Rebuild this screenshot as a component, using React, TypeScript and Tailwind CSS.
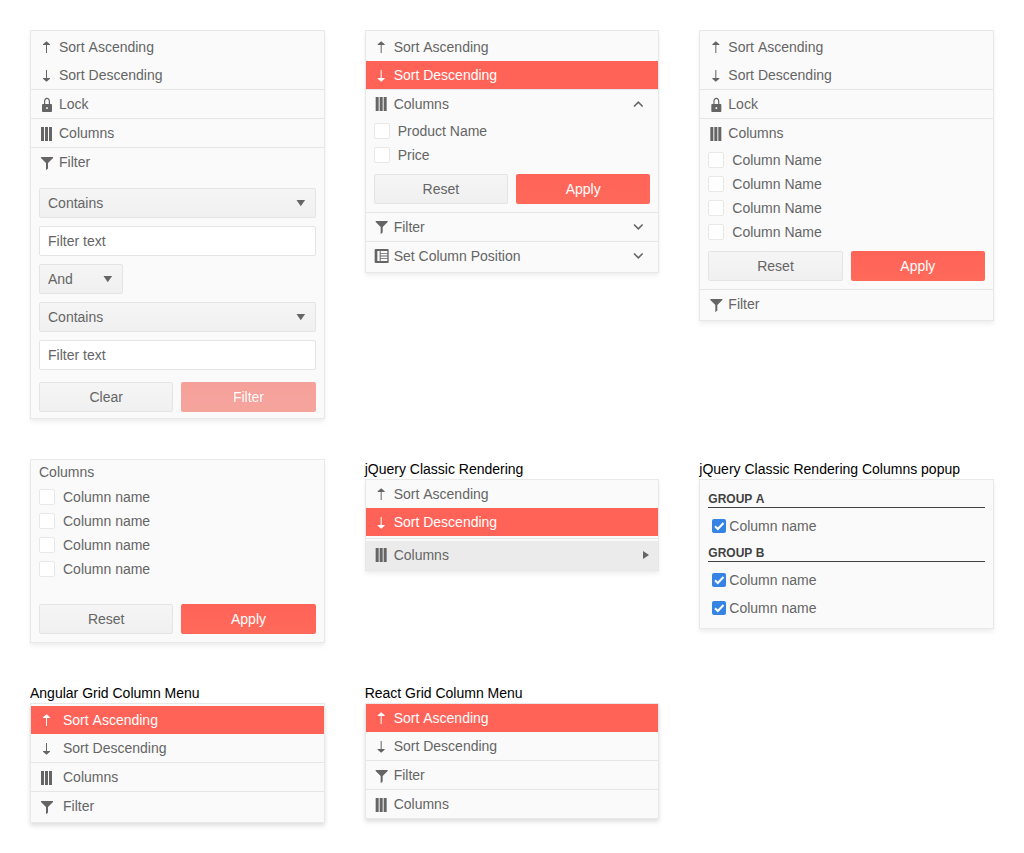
import type { ReactNode } from "react";

type IconName = "asc" | "desc" | "lock" | "columns" | "filter" | "position" | "up" | "down" | "caret" | "right";

const shapes: Record<IconName, ReactNode> = {
  asc: <path d="M7 14V6H4v-.8L7.500 2.300 11 5.200V6H8v8z" />,
  desc: <path d="M7 3v8H4v.8l3.500 2.900 3.500-2.900V11H8V3z" />,
  lock: <path d="M11 7V4.500C11 2.300 9.700.7 8 .7S5 2.300 5 4.500V7H4c-.6 0-1 .4-1 1v6c0 .6.4 1 1 1h8c.6 0 1-.4 1-1V8c0-.6-.4-1-1-1h-1zM6.200 4.500C6.200 3 7 1.900 8 1.900s1.800 1.100 1.800 2.600V7H6.200zM8.800 12H7.200v-1.700h1.600z" fillRule="evenodd" />,
  columns: <path d="M2 1h3v14H2zM6 1h3v14H6zM10 1h3v14h-3z" />,
  filter: <path d="M2 2h12v1L9 8v5.500L7.300 15H7V8L2 3z" />,
  position: <path d="M2 1h12q1 0 1 1v12q0 1-1 1H2q-1 0-1-1V2q0-1 1-1zM3.700 3v10H6V3zM7 3v1.900h6.700V3zM7 5.800v1.700h6.700V5.800zM7 8.500v1.700h6.700V8.500zM7 11.100V13h6.700v-1.900z" fillRule="evenodd" />,
  up: <path d="M3.700 10.500 8 6.200l4.300 4.300" fill="none" stroke="currentColor" strokeWidth="1.600" />,
  down: <path d="M3.700 5.500 8 9.800l4.300-4.300" fill="none" stroke="currentColor" strokeWidth="1.600" />,
  caret: <path d="M3.500 5h8.600L7.800 11.200z" />,
  right: <path d="M5 4v8l6-4z" />,
};

function Icon({ name, className = "" }: { name: IconName; className?: string }) {
  return (
    <svg viewBox="0 0 16 16" fill="currentColor" className={`size-4 shrink-0 ${className}`}>
      {shapes[name]}
    </svg>
  );
}

function Panel({ children, className = "", deep = false }: { children: ReactNode; className?: string; deep?: boolean }) {
  const shadow = deep
    ? "shadow-[0_2px_4px_rgba(0,0,0,0.08),0_4px_5px_rgba(0,0,0,0.06)]"
    : "shadow-[0_2px_4px_rgba(0,0,0,0.03),0_4px_5px_rgba(0,0,0,0.04)]";
  return <div className={`border border-[#e8e8e8] bg-[#fafafa] text-[#656565] ${shadow} ${className}`}>{children}</div>;
}

interface ItemProps {
  icon: IconName;
  label: string;
  end?: IconName;
  active?: boolean;
  hover?: boolean;
  wide?: boolean;
  low?: boolean;
}

function Item({ icon, label, end, active, hover, wide, low }: ItemProps) {
  return (
    <div
      className={`flex h-7 items-center px-2 ${wide ? "gap-2" : "gap-1"} ${active ? "bg-[#ff6358] text-white" : ""} ${hover ? "bg-[#ebebeb]" : ""}`}
    >
      <Icon name={icon} className={low ? "mt-0.5" : ""} />
      <span className="flex-1">{label}</span>
      {end && <Icon name={end} className={end === "right" ? "-mr-1" : "mr-1 translate-x-[0.33px]"} />}
    </div>
  );
}

const Separator = () => <div className="h-px bg-[#e6e6e6]" />;

function CheckRow({ label }: { label: string }) {
  return (
    <label className="flex h-6 items-center gap-2">
      <span className="size-4 rounded-xs border border-[#e8e8e8] bg-white" />
      {label}
    </label>
  );
}

function Actions({ first, second, disabled }: { first: string; second: string; disabled?: boolean }) {
  return (
    <div className="grid grid-cols-2 gap-2">
      <button className="h-[30px] rounded-xs border border-[#e4e4e4] bg-linear-to-b from-[#f5f5f5] to-[#f0f0f0]">{first}</button>
      <button
        className={`h-[30px] rounded-xs bg-linear-to-b from-[#ff6358] to-[#ff6a5a] text-white ${disabled ? "opacity-60 grayscale-[0.1]" : ""}`}
      >
        {second}
      </button>
    </div>
  );
}

function Picker({ value, className = "" }: { value: string; className?: string }) {
  return (
    <div
      className={`flex h-[30px] items-center justify-between rounded-xs border border-[#e4e4e4] bg-linear-to-b from-[#f5f5f5] to-[#f0f0f0] pr-1.5 pl-2 ${className}`}
    >
      {value}
      <Icon name="caret" />
    </div>
  );
}

function TextField() {
  return <div className="flex h-[30px] items-center rounded-xs border border-[#e4e4e4] bg-white px-2">Filter text</div>;
}

function Group({ title, names }: { title: string; names: string[] }) {
  return (
    <div>
      <div className="h-[18px] border-b border-[#424242] text-xs/[18px] font-bold text-[#424242]">{title}</div>
      <div className="pt-1 pb-1">
        {names.map((name, i) => (
          <label key={i} className="flex h-7 items-center gap-[3px] pl-1">
            <svg viewBox="0 0 14 14" className="size-3.5">
              <rect width="14" height="14" rx="2" fill="#3584e4" />
              <path d="M3 7.200 5.800 10 11.500 4" fill="none" stroke="#fff" strokeWidth="2" />
            </svg>
            {name}
          </label>
        ))}
      </div>
    </div>
  );
}

const Title = ({ children }: { children: ReactNode }) => <div className="h-5 text-black">{children}</div>;

export default function App() {
  return (
    <main className="grid min-h-[853px] grid-cols-3 content-start items-start gap-10 bg-white p-[30px] font-['Liberation_Sans',Arial,sans-serif] text-sm/5 [font-kerning:none]">
      <Panel className="pt-0.5">
        <Item icon="asc" label="Sort Ascending" />
        <Item icon="desc" label="Sort Descending" />
        <Separator />
        <Item icon="lock" label="Lock" low />
        <Separator />
        <Item icon="columns" label="Columns" low />
        <Separator />
        <Item icon="filter" label="Filter" low />
        <div className="flex flex-col gap-2 px-2 pt-3 pb-1.5">
          <Picker value="Contains" />
          <TextField />
          <Picker value="And" className="w-[84px]" />
          <Picker value="Contains" />
          <TextField />
          <div className="pt-1">
            <Actions first="Clear" second="Filter" disabled />
          </div>
        </div>
      </Panel>

      <Panel className="py-0.5 [&_svg:first-child]:-translate-x-[0.33px]">
        <Item icon="asc" label="Sort Ascending" />
        <Item icon="desc" label="Sort Descending" active />
        <Separator />
        <Item icon="columns" label="Columns" end="up" />
        <div className="px-2 pt-px pb-2">
          <CheckRow label="Product Name" />
          <CheckRow label="Price" />
          <div className="pt-[7px]">
            <Actions first="Reset" second="Apply" />
          </div>
        </div>
        <Separator />
        <Item icon="filter" label="Filter" end="down" />
        <Separator />
        <Item icon="position" label="Set Column Position" end="down" />
      </Panel>

      <Panel className="py-0.5 [&_svg:first-child]:translate-x-[0.33px]">
        <Item icon="asc" label="Sort Ascending" />
        <Item icon="desc" label="Sort Descending" />
        <Separator />
        <Item icon="lock" label="Lock" low />
        <Separator />
        <Item icon="columns" label="Columns" low />
        <div className="px-2 pt-px pb-2">
          <CheckRow label="Column Name" />
          <CheckRow label="Column Name" />
          <CheckRow label="Column Name" />
          <CheckRow label="Column Name" />
          <div className="pt-[7px]">
            <Actions first="Reset" second="Apply" />
          </div>
        </div>
        <Separator />
        <Item icon="filter" label="Filter" low />
      </Panel>

      <Panel className="px-2 pt-0.5 pb-2">
        <div>Columns</div>
        <div className="pt-[3px] pb-[23px]">
          <CheckRow label="Column name" />
          <CheckRow label="Column name" />
          <CheckRow label="Column name" />
          <CheckRow label="Column name" />
        </div>
        <Actions first="Reset" second="Apply" />
      </Panel>

      <div>
        <Title>jQuery Classic Rendering</Title>
        <Panel className="[&_svg:first-child]:-translate-x-[0.33px]">
          <Item icon="asc" label="Sort Ascending" />
          <Item icon="desc" label="Sort Descending" active />
          <div className="py-0.5">
            <Separator />
          </div>
          <Item icon="columns" label="Columns" end="right" hover />
          <div className="h-px bg-[#ebebeb]" />
        </Panel>
      </div>

      <div>
        <Title>jQuery Classic Rendering Columns popup</Title>
        <Panel className="px-2 pt-[10px] pb-0.5">
          <Group title="GROUP A" names={["Column name"]} />
          <Group title="GROUP B" names={["Column name", "Column name"]} />
        </Panel>
      </div>

      <div>
        <Title>Angular Grid Column Menu</Title>
        <Panel className="py-0.5" deep>
          <Item icon="asc" label="Sort Ascending" active wide />
          <Item icon="desc" label="Sort Descending" wide />
          <Separator />
          <Item icon="columns" label="Columns" wide low />
          <Separator />
          <Item icon="filter" label="Filter" wide low />
        </Panel>
      </div>

      <div>
        <Title>React Grid Column Menu</Title>
        <Panel className="[&_svg:first-child]:-translate-x-[0.33px]" deep>
          <Item icon="asc" label="Sort Ascending" active />
          <Item icon="desc" label="Sort Descending" />
          <Separator />
          <Item icon="filter" label="Filter" low />
          <Separator />
          <Item icon="columns" label="Columns" low />
        </Panel>
      </div>
    </main>
  );
}
